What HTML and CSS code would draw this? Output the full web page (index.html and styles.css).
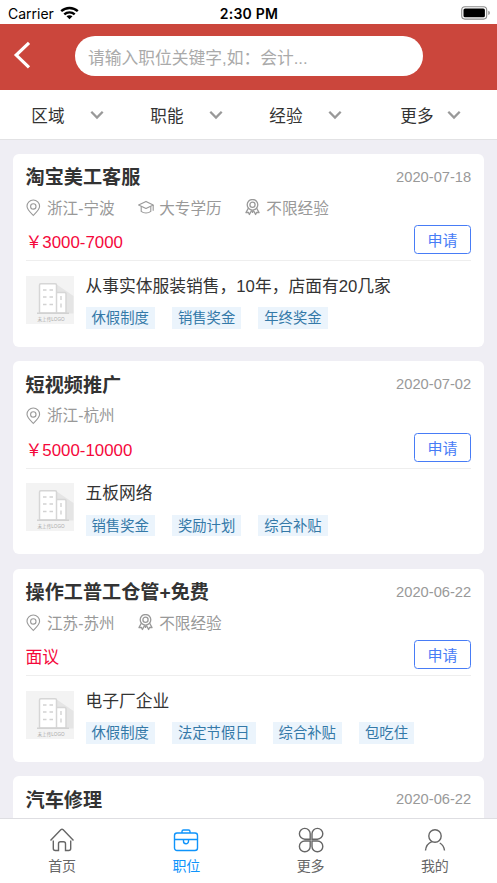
FILE: index.html
```html
<!DOCTYPE html>
<html lang="zh-CN">
<head>
<meta charset="utf-8">
<meta name="viewport" content="width=device-width, initial-scale=1">
<title>职位</title>
<link rel="stylesheet" href="styles.css">
</head>
<body>
<svg class="defs" aria-hidden="true">
  <symbol id="chevron" viewBox="0 0 14 10"><path d="M1.300 1.800 7 7.600l5.700-5.800" fill="none" stroke="currentColor" stroke-width="2.300"/></symbol>
  <symbol id="pin" viewBox="0 0 16 18"><g fill="none" stroke="currentColor" stroke-width="1.100"><path d="M7.300 16.400C4 13.200 1 10.500 1 7.300a6.300 6.300 0 0 1 12.600 0c0 3.200-3 5.900-6.300 9.100z"/><circle cx="7.300" cy="7.400" r="2.700"/></g></symbol>
  <symbol id="cap" viewBox="0 0 16 18"><g fill="none" stroke="currentColor" stroke-width="1.100" stroke-linejoin="round"><path d="M.6 6 8 2.400 15.200 6 8 9.500z"/><path d="M3.200 7.400v5c2.600 2.200 7 2.200 9.600 0v-5M15.200 6v5.800"/></g></symbol>
  <symbol id="medal" viewBox="0 0 16 18"><g fill="none" stroke="currentColor" stroke-width="1.300" stroke-linejoin="round"><circle cx="7.500" cy="5.800" r="5.300"/><circle cx="7.500" cy="5.800" r="2.600"/><path d="M3.300 9.200 1 13.600l2.400-.2 1 2.100 2.300-4.300M11.700 9.200l2.300 4.400-2.400-.2-1 2.100-2.300-4.300M7.500 11.500V14"/></g></symbol>
  <symbol id="building" viewBox="0 0 48 48">
    <path fill="#f3f3f3" d="M0 0h48v48H0z"/>
    <path fill="#e5e5e5" d="m30 8 17.500 12v17.500H30z"/>
    <g fill="#fff" stroke="#d6d6d6" stroke-width="1.500"><path d="M13.500 37V9q0-1.200 1.200-1.200h14.600q1.200 0 1.200 1.200v28zM30.500 37V16.500h8.200q1.300 0 1.300 1.300V37z"/></g>
    <path fill="none" stroke="#d2d2d2" stroke-width="1.400" d="M11 37.200h32M17 14h3.500m3 0H27M17 21h3.500m3 0H27M17 28.500h3.500m3 0H27M35 20v4m0 3.500v4"/>
  </symbol>
</svg>
<div class="app">
  <div class="status">
    <div class="carrier">Carrier
      <svg width="19" height="14" viewBox="0 0 19 14"><g fill="none" stroke="#000" stroke-width="2.400"><path d="M1.200 5.200c4.700-4.300 11.900-4.300 16.600 0M4.300 8.400c2.900-2.700 7.500-2.700 10.400 0"/></g><path d="M6.500 10.300c1.700-1.500 4.300-1.500 6 0l-3 3z"/></svg>
    </div>
    <div class="time">2:30 PM</div>
    <svg class="battery" width="30" height="14" viewBox="0 0 30 14"><rect x=".7" y=".7" width="25" height="12.400" rx="3.300" fill="none" stroke="#8c8c8c" stroke-width="1.100"/><rect x="2.500" y="2.500" width="21.400" height="8.800" rx="1.600"/><path d="M27.300 4.800q1.600.6 1.600 2.100t-1.600 2.100z" fill="#8c8c8c"/></svg>
  </div>
  <header class="header">
    <svg class="back" width="18" height="28" viewBox="0 0 18 28"><path d="M16 1.800 3.200 14.100 16 26.400" fill="none" stroke="#fff" stroke-width="3.200"/></svg>
    <div class="search">请输入职位关键字,如：会计...</div>
  </header>
  <nav class="filters">
    <div class="filter">区域<svg><use href="#chevron"/></svg></div>
    <div class="filter">职能<svg><use href="#chevron"/></svg></div>
    <div class="filter">经验<svg><use href="#chevron"/></svg></div>
    <div class="filter filter-more">更多<svg><use href="#chevron"/></svg></div>
  </nav>
  <main class="list">
    <article class="card">
      <div class="top"><h2>淘宝美工客服</h2><time>2020-07-18</time></div>
      <div class="meta"><span><svg><use href="#pin"/></svg>浙江-宁波</span><span><svg><use href="#cap"/></svg>大专学历</span><span><svg><use href="#medal"/></svg>不限经验</span></div>
      <div class="pay"><span>￥3000-7000</span><button>申请</button></div>
      <div class="company">
        <div class="logo"><svg><use href="#building"/></svg><span class="logo-text">未上传LOGO</span></div>
        <div class="info"><div class="name">从事实体服装销售，10年，店面有20几家</div><div class="tags"><span>休假制度</span><span>销售奖金</span><span>年终奖金</span></div></div>
      </div>
    </article>
    <article class="card">
      <div class="top"><h2>短视频推广</h2><time>2020-07-02</time></div>
      <div class="meta"><span><svg><use href="#pin"/></svg>浙江-杭州</span></div>
      <div class="pay"><span>￥5000-10000</span><button>申请</button></div>
      <div class="company">
        <div class="logo"><svg><use href="#building"/></svg><span class="logo-text">未上传LOGO</span></div>
        <div class="info"><div class="name">五板网络</div><div class="tags"><span>销售奖金</span><span>奖励计划</span><span>综合补贴</span></div></div>
      </div>
    </article>
    <article class="card">
      <div class="top"><h2>操作工普工仓管+免费</h2><time>2020-06-22</time></div>
      <div class="meta"><span><svg><use href="#pin"/></svg>江苏-苏州</span><span><svg><use href="#medal"/></svg>不限经验</span></div>
      <div class="pay"><span>面议</span><button>申请</button></div>
      <div class="company">
        <div class="logo"><svg><use href="#building"/></svg><span class="logo-text">未上传LOGO</span></div>
        <div class="info"><div class="name">电子厂企业</div><div class="tags"><span>休假制度</span><span>法定节假日</span><span>综合补贴</span><span>包吃住</span></div></div>
      </div>
    </article>
    <article class="card">
      <div class="top"><h2>汽车修理</h2><time>2020-06-22</time></div>
    </article>
  </main>
  <nav class="tabs">
    <div class="tab"><svg viewBox="0 0 26 26"><path d="M1.500 13.600 11.800 2.800q1.200-1.200 2.400 0l10.300 10.800M4.300 13.500v8q0 2 2 2h3.200v-6.700q0-2 2-2h3q2 0 2 2v6.700h3.200q2 0 2-2v-8"/></svg>首页</div>
    <div class="tab active"><svg viewBox="0 0 26 26"><rect x="1.500" y="6" width="23" height="17.500" rx="2.500"/><path d="M9 6V4.500Q9 3 10.500 3h5Q17 3 17 4.500V6M1.500 12.500h23M10.500 12.500v1.700a2.500 2.500 0 0 0 5 0v-1.700"/></svg>职位</div>
    <div class="tab"><svg viewBox="0 0 26 26"><path d="M12.200 12.200H6.800a5.400 5.400 0 1 1 5.400-5.400zM14 12.200V6.800a5.400 5.400 0 1 1 5.400 5.400zM12.200 14v5.400A5.400 5.400 0 1 1 6.800 14zM14 14h5.400a5.400 5.400 0 1 1-5.400 5.400z"/></svg>更多</div>
    <div class="tab"><svg viewBox="0 0 26 26"><circle cx="13" cy="9" r="6.200"/><path d="M3.500 23.500c.5-4.500 2.500-7.300 6.500-8.800M17.800 16c2.700 1.500 4.300 4.200 4.700 7.500"/></svg>我的</div>
  </nav>
</div>
</body>
</html>
```
FILE: styles.css
```css
* { box-sizing: border-box; }
body {
  margin: 0;
  background: #efeef4;
  color: #333;
  font-family: "Liberation Sans", "Noto Sans CJK SC", sans-serif;
}
.defs { position: absolute; width: 0; height: 0; }
.app { display: flex; flex-direction: column; height: 883px; overflow: hidden; }

.status {
  flex: none;
  display: grid;
  grid-template-columns: 1fr auto 1fr;
  align-items: center;
  height: 24px;
  padding: 2px 7px 0 8px;
  background: #fff;
  color: #000;
  font-family: Inter, sans-serif;
  font-size: 14px;
}
.carrier { display: flex; align-items: center; gap: 6px; }
.time { font-weight: 600; letter-spacing: .25px; }
.battery { justify-self: end; margin-right: -1px; }

.header {
  flex: none;
  display: flex;
  height: 66px;
  padding: 12px 0 0 13px;
  background: #cb463c;
}
.back { margin: 5px 43.500px 0 0; }
.search {
  width: 348px;
  height: 39.500px;
  padding-left: 13.500px;
  border-radius: 20px;
  background: #fff;
  color: #aaa;
  font-size: 16.750px;
  line-height: 45px;
}

.filters {
  flex: none;
  display: grid;
  grid-template-columns: 103.500px 119px 119px 119px;
  height: 50px;
  background: #fff;
  border-bottom: 1.500px solid #e2e2e4;
}
.filter {
  display: flex;
  justify-content: flex-end;
  align-items: center;
  gap: 25px;
  padding-top: 1px;
  font-size: 16.600px;
}
.filter-more { gap: 13px; }
.filter svg { width: 14px; height: 10px; color: #999; }

.list { flex: 1; min-height: 0; overflow: hidden; padding: 13.700px 13.300px 0 13px; }
.card {
  height: 193.300px;
  margin-bottom: 14.200px;
  padding: 9.300px 12.500px 0;
  border-radius: 6px;
  background: #fff;
}
.top { display: flex; justify-content: space-between; align-items: center; height: 28px; }
.top h2 { margin: 0; padding-top: 3px; font-size: 19.150px; line-height: 28px; font-weight: 700; }
.top time { color: #999; font-size: 14.700px; }
.meta { display: flex; gap: 23.200px; height: 24px; margin-top: 5px; color: #999; font-size: 15.600px; line-height: 26px; }
.meta span { display: flex; align-items: center; padding-top: 2px; }
.meta svg { width: 16px; height: 18px; margin: -1px 5.500px 0 0; }
.pay {
  display: flex;
  justify-content: space-between;
  height: 36px;
  margin-top: 5.500px;
  border-bottom: 1.300px solid #eee;
  color: #f5083b;
  font-size: 16.850px;
  line-height: 36px;
}
.pay button {
  width: 57.500px;
  height: 29px;
  padding: 0;
  border: 1.300px solid #477cf6;
  border-radius: 3.500px;
  background: #fff;
  color: #477cf6;
  font: inherit;
  font-size: 15px;
  line-height: 29px;
}
.company { display: flex; gap: 12px; padding-top: 14.500px; }
.logo { display: grid; width: 48px; height: 48px; }
.logo svg { grid-area: 1 / 1; width: 48px; height: 48px; }
.logo-text { grid-area: 1 / 1; align-self: end; text-align: center; color: #aaa; font-size: 4.600px; line-height: 9px; padding-left: 3px; white-space: nowrap; }
.name { height: 31.300px; font-size: 16.750px; line-height: 22px; white-space: nowrap; }
.tags { display: flex; gap: 17px; }
.tags span { height: 21.700px; padding: 0 6px; background: #ebf4fc; color: #3479a8; font-size: 14.350px; line-height: 22.500px; white-space: nowrap; }

.tabs { flex: none; display: grid; grid-template-columns: repeat(4, 1fr); height: 65px; border-top: 1px solid #dedee2; background: #fff; }
.tab { display: flex; flex-direction: column; align-items: center; padding-top: 7.500px; color: #666; font-size: 14px; line-height: 26px; }
.tab svg { width: 26px; height: 26px; fill: none; stroke: currentColor; stroke-width: 1.400; }
.active { color: #0f94fb; }
```
